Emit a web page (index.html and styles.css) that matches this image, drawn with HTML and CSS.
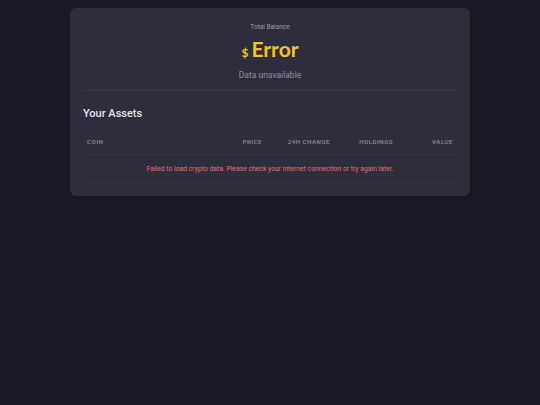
FILE: index.html
```html
<!DOCTYPE html>
<html lang="en">
<head>
<meta charset="utf-8">
<title>Portfolio</title>
<link rel="stylesheet" href="styles.css">
</head>
<body>
<div class="page">
  <div class="card">
    <div class="balance">
      <div class="balance-label">Total Balance</div>
      <div class="balance-value"><span class="currency">$</span>Error</div>
      <div class="balance-sub">Data unavailable</div>
    </div>
    <div class="assets">
      <h2 class="assets-title">Your Assets</h2>
      <div class="table">
        <div class="row head">
          <div class="cell left">Coin</div>
          <div class="cell">Price</div>
          <div class="cell">24h Change</div>
          <div class="cell">Holdings</div>
          <div class="cell">Value</div>
        </div>
        <div class="row message">
          <div class="error">Failed to load crypto data. Please check your internet connection or try again later.</div>
        </div>
      </div>
    </div>
  </div>
</div>
</body>
</html>
```
FILE: styles.css
```css
* { box-sizing: border-box; }
html, body { margin: 0; padding: 0; }
body {
  background: #1c1c28;
  font-family: Roboto, "Liberation Sans", sans-serif;
  width: 540px;
  height: 405px;
}
.page {
  display: flex;
  justify-content: center;
  padding-top: 8px;
}
.card {
  width: 400px;
  height: 188px;
  background: #2d2d3b;
  border-radius: 6px;
  padding: 0 13px;
  box-shadow: 0 2px 8px rgba(0,0,0,0.25);
}
.balance {
  text-align: center;
  border-bottom: 1px solid #38384a;
  height: 83px;
  padding-top: 15px;
}
.balance-label {
  font-size: 6.5px;
  color: #9c9cab;
  line-height: 8px;
}
.balance-value {
  font-family: Lato, "Open Sans", sans-serif;
  font-weight: 700;
  font-size: 21px;
  color: #f0c228;
  line-height: 26px;
  margin-top: 5px;
}
.currency {
  font-size: 12px;
  margin-right: 3px;
}
.balance-sub {
  font-size: 8.5px;
  color: #8f8fa0;
  line-height: 10px;
  margin-top: 4px;
}
.assets-title {
  margin: 0;
  font-size: 11px;
  font-weight: 500;
  color: #e4e4ea;
  line-height: 14px;
  padding-top: 16px;
}
.table {
  margin-top: 12px;
}
.row {
  display: grid;
  grid-template-columns: 120px 63px 68px 63px 60px;
  border-bottom: 1px solid #36364a;
}
.head {
  height: 22px;
  align-items: start;
  padding-top: 5px;
}
.cell {
  font-size: 6.2px;
  font-weight: 500;
  text-transform: uppercase;
  letter-spacing: 0.45px;
  color: #8e8e9e;
  text-align: right;
  padding: 0 4px;
  line-height: 8px;
}
.cell.left { text-align: left; }
.message {
  display: flex;
  justify-content: center;
  align-items: center;
  height: 28px;
  padding-top: 1px;
}
.error {
  font-size: 6.8px;
  color: #e0707a;
}
```
